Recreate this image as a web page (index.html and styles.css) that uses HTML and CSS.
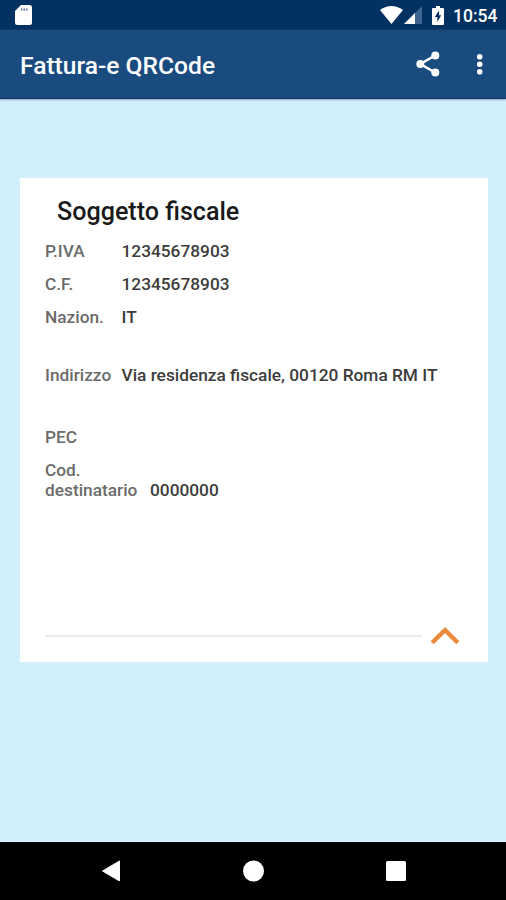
FILE: index.html
```html
<!DOCTYPE html>
<html lang="it">

	<head>
		<meta charset="utf-8">
		<title>Fattura-e QRCode</title>
		<link rel="stylesheet" href="styles.css">
	</head>

	<body>
		<!-- barra di stato -->
		<div class="status-bar">
			<svg class="sd" width="17" height="20" viewBox="0 0 17 20">
				<path fill="#fff" d="M6 0h8.500Q17 0 17 2.500v15Q17 20 14.500 20h-12Q0 20 0 17.500V6z" />
				<path fill="#5d7195" d="M6 3.500h1.500v2H6zM8.500 3.500h1.500v2H8.500zM11 3.500h1.500v2H11z" />
			</svg>
			<svg class="wifi" width="23" height="18" viewBox="0 0 23 18">
				<path fill="#fff" d="M0 4Q11.500-4 23 4L11.500 18z" />
			</svg>
			<svg class="signal" width="18" height="18" viewBox="0 0 18 18">
				<path fill="#3d6590" d="M18 0v18H0z" />
				<path fill="#fff" d="M11 7v11H0z" />
			</svg>
			<svg class="battery" width="12" height="19" viewBox="0 0 12 19">
				<path fill="#fff" d="M4 0h4v2h3q1 0 1 1v15q0 1-1 1H1q-1 0-1-1V3q0-1 1-1h3z" />
				<path fill="#033262" d="M7 4.500L2.800 11H5.300v5L9.200 9.300H7z" />
			</svg>
			<span class="clock">10:54</span>
		</div>

		<!-- barra dell'app -->
		<div class="app-bar">
			<h1>Fattura-e QRCode</h1>
			<svg class="share" width="24" height="26" viewBox="0 0 24 26">
				<path fill="none" stroke="#fff" stroke-width="2.600" d="M19 4.500L4.500 13L19 21.500" />
				<g fill="#fff">
					<circle cx="19.300" cy="4.500" r="4" />
					<circle cx="4.300" cy="13" r="4" />
					<circle cx="19.300" cy="21.500" r="4" />
				</g>
			</svg>
			<svg class="more" width="6" height="22" viewBox="0 0 6 22">
				<g fill="#fff">
					<circle cx="2.700" cy="3.700" r="2.800" />
					<circle cx="2.700" cy="11.200" r="2.800" />
					<circle cx="2.700" cy="18.700" r="2.800" />
				</g>
			</svg>
		</div>

		<div class="content">
			<div class="card">
				<h2>Soggetto fiscale</h2>
				<div class="row">
					<span class="label">P.IVA</span>
					<span class="value">12345678903</span>
				</div>
				<div class="row">
					<span class="label">C.F.</span>
					<span class="value">12345678903</span>
				</div>
				<div class="row">
					<span class="label">Nazion.</span>
					<span class="value">IT</span>
				</div>
				<div class="row address">
					<span class="label">Indirizzo</span>
					<span class="value">Via residenza fiscale, 00120 Roma RM IT</span>
				</div>
				<div class="row pec">
					<span class="label">PEC</span>
				</div>
				<div class="row code">
					<span class="label">Cod.<br>destinatario</span>
					<span class="value">0000000</span>
				</div>
				<div class="card-footer">
					<div class="line"></div>
					<svg width="30" height="19" viewBox="0 0 30 19">
						<path fill="none" stroke="#ec8a3c" stroke-width="4.400" d="M2.200 16.700L15 4L27.800 16.700" />
					</svg>
				</div>
			</div>
		</div>

		<!-- barra di navigazione -->
		<div class="nav-bar">
			<svg width="20" height="22" viewBox="0 0 20 22">
				<path fill="#fff" stroke="#fff" stroke-width="1" stroke-linejoin="round" d="M1.500 11L18.500 1v20z" />
			</svg>
			<svg width="22" height="22" viewBox="0 0 22 22">
				<circle fill="#fff" cx="10.500" cy="11" r="10.500" />
			</svg>
			<svg width="20" height="20" viewBox="0 0 20 20">
				<rect fill="#fff" width="20" height="20" rx="1.500" />
			</svg>
		</div>
	</body>

</html>
```

FILE: styles.css
```css
* {
	box-sizing: border-box;
}

body {
	margin: 0;
	height: 900px;
	display: flex;
	flex-direction: column;
	overflow: hidden;
	background-color: #d2effc;
	font-family: Roboto, "Liberation Sans", sans-serif;
	font-weight: 500;
}

svg {
	display: block;
	flex: none;
}

/* barra di stato */
.status-bar {
	height: 30px;
	padding: 0 9px 0 15px;
	display: flex;
	align-items: center;
	background-color: #033262;
	color: #fff;
}

.wifi {
	margin-left: auto;
}

.signal {
	margin-left: 1px;
}

.battery {
	margin-left: 10px;
}

.clock {
	width: 44px;
	margin-left: 9px;
	margin-top: 2px;
	font-size: 17.5px;
	line-height: 20px;
	white-space: nowrap;
}

/* barra dell'app */
.app-bar {
	height: 69px;
	padding: 0 23px 0 20px;
	display: flex;
	align-items: center;
	background-color: #1a4b7f;
	border-bottom: 1px solid #0b3668;
	box-shadow: 0 1px 2px #8c9fc0;
	color: #fff;
}

h1 {
	margin: 4px auto 0 0;
	font-size: 24.6px;
	line-height: 30px;
	font-weight: 500;
}

.more {
	margin-left: 37px;
}

/* scheda */
.content {
	flex: 1;
	padding: 79px 18px 0 20px;
}

.card {
	height: 484px;
	padding: 19px 28px 17px 25px;
	display: flex;
	flex-direction: column;
	background-color: #fff;
}

h2 {
	margin: 0 0 14px 12px;
	font-size: 25.1px;
	line-height: 30px;
	font-weight: 500;
	color: #1a1a1a;
}

.row {
	display: flex;
	align-items: flex-end;
	margin-bottom: 13px;
	font-size: 17.3px;
	line-height: 20px;
	white-space: nowrap;
}

.label {
	width: 76.5px;
	color: #6b6b6b;
}

.value {
	color: #3c3c3c;
}

.address {
	margin-top: 25px;
	margin-bottom: 42px;
}

.code .label {
	width: 105px;
}

.card-footer {
	margin-top: auto;
	display: flex;
	align-items: center;
	justify-content: space-between;
}

.line {
	width: 377px;
	height: 2px;
	background-color: #ebebeb;
}

/* barra di navigazione */
.nav-bar {
	height: 58px;
	padding: 0 100px 0 101px;
	display: flex;
	align-items: center;
	justify-content: space-between;
	background-color: #000;
}
```
